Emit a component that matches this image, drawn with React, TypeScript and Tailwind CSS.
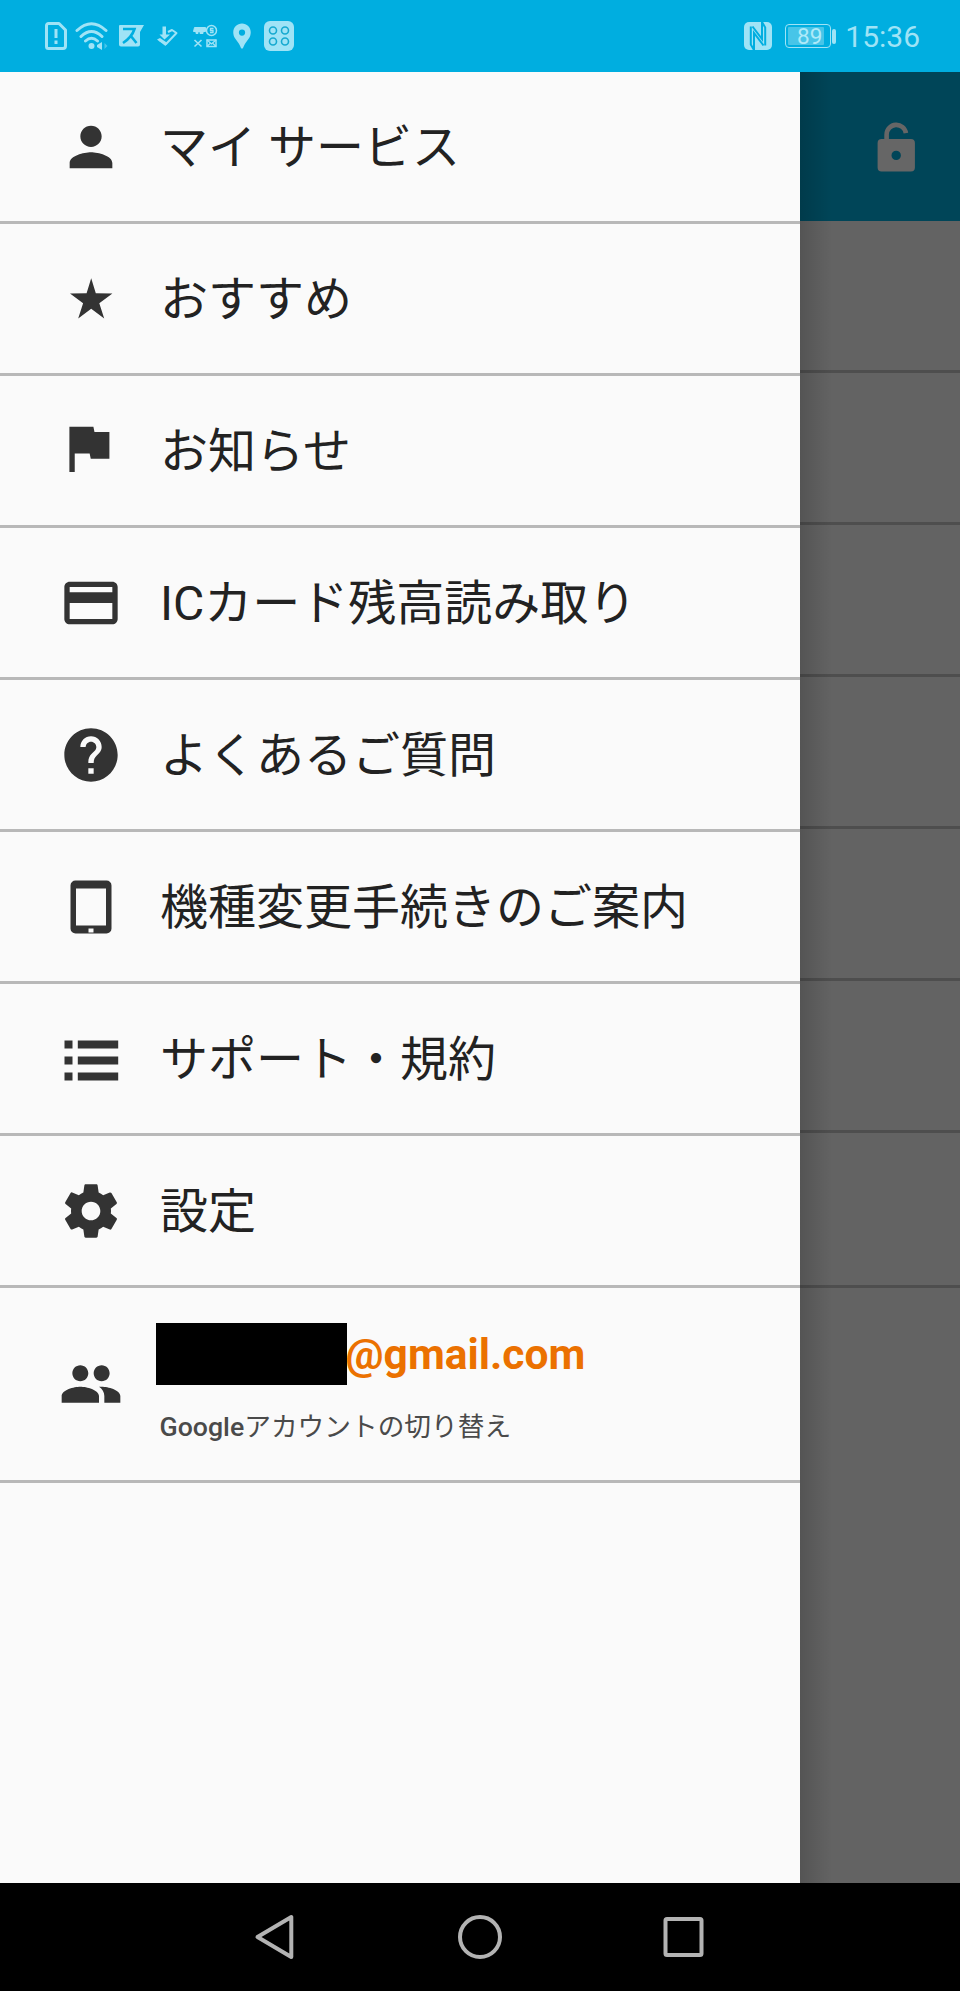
import React from 'react';
import { MdPerson, MdCreditCard, MdHelp, MdPeople, MdLocationPin } from 'react-icons/md';

interface MenuItem {
  label: string;
  icon: React.ReactNode;
}

const StarIcon = () => (
  <svg viewBox="0 0 64 64" className="w-16 h-16" fill="currentColor">
    <path d="M32.200 11.200L36.800 26.200 53.400 26.500 40.300 36.200 45.200 51.500 32.200 41.800 19.200 51.500 24.100 36.200 11 26.500 27.600 26.200z" />
  </svg>
);

const FlagIcon = () => (
  <svg viewBox="1.1 1.1 24 24" className="w-16 h-16" fill="currentColor">
    <path d="M14.4 6L14 4H5v17h2v-7h5.6l.4 2h7V6z" />
  </svg>
);

const TabletIcon = () => (
  <svg viewBox="0 0 64 64" className="w-16 h-16" fill="currentColor" fillRule="evenodd">
    <path d="M16.500 5.500h31a5 5 0 0 1 5 5v43a5 5 0 0 1-5 5h-31a5 5 0 0 1-5-5v-43a5 5 0 0 1 5-5zM17 13.500v37h30v-37zM29.500 53.500v4h5v-4z" />
  </svg>
);

const ListIcon = () => (
  <svg viewBox="0 0 64 64" className="w-16 h-16" fill="currentColor">
    <path d="M5.500 13.500h8v8h-8zM18.800 13.500h40.400v8H18.800zM5.500 29.500h8v8h-8zM18.800 29.500h40.400v8H18.800zM5.500 45.500h8v8h-8zM18.800 45.500h40.400v8H18.800z" />
  </svg>
);

const GearIcon = () => (
  <svg viewBox="0 0 24 24" className="w-16 h-16" fill="currentColor">
    <path d="M19.43 12.98c.04-.32.07-.64.07-.98s-.03-.66-.07-.98l2.11-1.65c.19-.15.24-.42.12-.64l-2-3.46c-.12-.22-.39-.3-.61-.22l-2.49 1c-.52-.4-1.08-.73-1.69-.98l-.38-2.65C14.46 2.18 14.25 2 14 2h-4c-.25 0-.46.18-.49.42l-.38 2.65c-.61.25-1.17.59-1.69.98l-2.49-1c-.23-.09-.49 0-.61.22l-2 3.46c-.13.22-.07.49.12.64l2.11 1.65c-.04.32-.07.65-.07.98s.03.66.07.98l-2.11 1.65c-.19.15-.24.42-.12.64l2 3.46c.12.22.39.3.61.22l2.49-1c.52.4 1.08.73 1.69.98l.38 2.65c.03.24.24.42.49.42h4c.25 0 .46-.18.49-.42l.38-2.65c.61-.25 1.17-.59 1.69-.98l2.49 1c.23.09.49 0 .61-.22l2-3.46c.12-.22.07-.49-.12-.64l-2.11-1.65zM12 15.5c-1.93 0-3.5-1.57-3.5-3.5s1.57-3.500 3.5-3.500 3.5 1.57 3.5 3.5-1.57 3.5-3.5 3.5z" />
  </svg>
);

const UnlockIcon = () => (
  <svg viewBox="0 4.6 64 64" className="w-16 h-16">
    <path d="M22.600 32V24a9.700 9.700 0 0 1 19.300-1.200" fill="none" stroke="currentColor" strokeWidth="4.600" />
    <path fillRule="evenodd" fill="currentColor" d="M17.600 28.500h29.300a4 4 0 0 1 4 4v24.500a4 4 0 0 1-4 4H17.600a4 4 0 0 1-4-4V32.500a4 4 0 0 1 4-4zM32.200 40.300a4.700 4.700 0 1 0 0 9.400 4.700 4.700 0 1 0 0-9.400z" />
  </svg>
);

const menuItems: MenuItem[] = [
  { label: 'マイ サービス', icon: <MdPerson className="w-16 h-16" /> },
  { label: 'おすすめ', icon: <StarIcon /> },
  { label: 'お知らせ', icon: <FlagIcon /> },
  { label: 'ICカード残高読み取り', icon: <MdCreditCard className="w-16 h-16" /> },
  { label: 'よくあるご質問', icon: <MdHelp className="w-16 h-16" /> },
  { label: '機種変更手続きのご案内', icon: <TabletIcon /> },
  { label: 'サポート・規約', icon: <ListIcon /> },
  { label: '設定', icon: <GearIcon /> },
];

const StatusBar = () => (
  <div className="h-[72px] shrink-0 bg-[#00aee0] flex items-center justify-between pl-[44px] pr-[40px] text-[#9fe3f6]">
    <div className="flex items-center">
      {/* SIM alert */}
      <svg viewBox="0 0 24 30" className="w-6 h-[30px]" fill="none" stroke="currentColor" strokeWidth="3">
        <path d="M4.500 2.500h10.500l6.500 6.500v16a2.500 2.500 0 0 1-2.500 2.500H4.500a2 2 0 0 1-2-2v-21a2 2 0 0 1 2-2z" strokeLinejoin="round" />
        <path d="M12 8v9M12 19.500v3.500" />
      </svg>
      {/* Wi-Fi */}
      <svg viewBox="0 0 34 30" className="w-[34px] h-[30px] ml-[7px]" fill="none" stroke="currentColor" strokeWidth="3" strokeLinecap="round">
        <path d="M2 9.500Q16.500-4 31 9.500M6 15.500Q16.500 5.500 27 15.500M10.500 20Q16.500 14.500 22.500 20" />
        <circle cx="16.500" cy="25" r="3" fill="currentColor" stroke="none" />
        <path d="M27 21v8l-5-3v-2z" fill="currentColor" stroke="none" />
        <path d="M29.500 22v6l3-3z" fill="currentColor" stroke="none" opacity="0.45" />
      </svg>
      {/* Notification badge */}
      <svg viewBox="0 0 26 24" className="w-[26px] h-6 ml-[9px]">
        <path d="M2 1h24l-4 7v12.500a2 2 0 0 1-2 2H3a2 2 0 0 1-2-2V2a1 1 0 0 1 1-1z" fill="currentColor" />
        <path d="M5 5h11.500Q14 13 5 19M12.500 11.500l6 7.500" fill="none" stroke="#00aee0" strokeWidth="2.600" />
      </svg>
      {/* Phone transfer */}
      <svg viewBox="0 0 22 22" className="w-[22px] h-[22px] ml-[12px]">
        <path d="M12 7l4-2 4.500 3L10 19 3 15" fill="none" stroke="currentColor" strokeWidth="2" strokeLinejoin="round" />
        <path d="M1 14.500l3-1.500 7.500 5-2 3z" fill="currentColor" />
        <path d="M6.500 1.500h3.500v8h4L8.500 14.500 3.500 9.500h3z" fill="currentColor" />
      </svg>
      {/* Key and mail */}
      <svg viewBox="0 0 26 24" className="w-[26px] h-6 ml-[14px]" fill="none" stroke="currentColor">
        <path d="M2.500 3.500h11v4H11v2H8v-2H6v2H4v-2H1.500z" fill="currentColor" />
        <circle cx="19.500" cy="6.500" r="5" strokeWidth="1.500" />
        <path d="M21.500 4.500h-3v2h2.500v2h-3" strokeWidth="1.300" />
        <path d="M2.500 16l7 6.500M9.500 16l-7 6.500" strokeWidth="1.600" />
        <rect x="15" y="16" width="9" height="6.500" strokeWidth="1.500" />
        <path d="M15 16l4.500 4 4.500-4M15 22.500l3-3M24 22.500l-3-3" strokeWidth="1.300" />
      </svg>
      <MdLocationPin className="w-[30px] h-[30px] ml-[9px]" />
      {/* App clone */}
      <svg viewBox="0 0 30 30" className="w-[30px] h-[30px] ml-[7px]">
        <rect width="30" height="30" rx="6" fill="currentColor" />
        <g fill="none" stroke="#16a9d0" strokeWidth="1.600">
          <circle cx="9" cy="9.500" r="3.500" />
          <circle cx="21" cy="9.500" r="3.500" />
          <circle cx="9" cy="20.500" r="3.500" />
          <circle cx="21" cy="20.500" r="3.500" />
        </g>
      </svg>
    </div>
    <div className="flex items-center">
      {/* NFC */}
      <svg viewBox="0 0 28 28" className="w-7 h-7">
        <rect width="28" height="28" rx="5" fill="currentColor" />
        <g fill="none" stroke="#00aee0" strokeWidth="2">
          <path d="M6.800 4.500V22.500L10 28V11l9.500 12.500" />
          <path d="M21.200 23.500V5.500L18 0v17L8.500 4.500" />
        </g>
      </svg>
      {/* Battery */}
      <div className="ml-[13px] w-[46px] h-6 rounded-[4px] border border-[#9fe3f6] p-[2px]">
        <div className="w-[36px] h-[18px] bg-[#47c5e8] rounded-[1px] flex items-center justify-end pr-[2px] text-[22.500px] leading-none text-[#aeeaf9]">89</div>
      </div>
      <div className="w-1 h-[15px] rounded-sm bg-current ml-[1px]" />
      <div className="ml-[9px] pt-[2px] text-[30px] leading-none">15:36</div>
    </div>
  </div>
);

const NavBar = () => (
  <div className="h-[108px] shrink-0 bg-black flex items-center justify-center gap-[160px] text-[#b3b3b3]">
    <svg viewBox="0 0 44 46" className="w-11 h-[46px]" fill="none" stroke="currentColor" strokeWidth="4" strokeLinejoin="round">
      <path d="M3.500 23L37.300 3v40z" />
    </svg>
    <svg viewBox="0 0 44 44" className="w-11 h-11" fill="none" stroke="currentColor" strokeWidth="4">
      <circle cx="22" cy="22" r="20" />
    </svg>
    <svg viewBox="0 0 44 44" className="w-11 h-11" fill="none" stroke="currentColor" strokeWidth="4">
      <rect x="3.500" y="4" width="36" height="36" rx="1.500" />
    </svg>
  </div>
);

const Drawer = () => (
  <div className="w-[800px] bg-[#fafafa] text-[#333333]">
    {menuItems.map(item => (
      <div key={item.label} className="h-[152px] border-b-3 border-[#b8b8b8] flex items-center pl-[58.500px]">
        {item.icon}
        <span className="ml-[37.500px] pt-[3px] text-[48px] leading-none text-[#222222]">{item.label}</span>
      </div>
    ))}
    <div className="h-[195px] border-b-3 border-[#b8b8b8] flex items-center pl-[58.500px]">
      <MdPeople className="w-16 h-16" />
      <div className="ml-[33px] pb-[5px]">
        <div className="flex items-center">
          <div className="w-[191px] h-[62px] bg-black" />
          <span className="-ml-px pt-[3px] text-[42.500px] leading-none font-bold text-[#eb7100]">@gmail.com</span>
        </div>
        <div className="mt-[29px] ml-[4px] text-[26.700px] leading-none text-[#4a4a4a]">
          <span className="font-medium">Google</span>アカウントの切り替え
        </div>
      </div>
    </div>
  </div>
);

// Page behind the open drawer, already darkened by the scrim
const DimmedPage = () => (
  <div className="relative flex-1 bg-[#636363]">
    <div className="h-[149px] bg-[#004558] flex items-center justify-end pr-[32px] text-[#666666]">
      <UnlockIcon />
    </div>
    {menuItems.slice(1).map(item => (
      <div key={item.label} className="h-[152px] last-of-type:h-[155px] border-b-3 border-[#4e4e4e]" />
    ))}
    <span className="absolute inset-y-0 left-0 w-8 bg-linear-to-r from-black/15 to-transparent" />
  </div>
);

export default function App() {
  return (
    <div className="w-[960px] h-[1991px] flex flex-col overflow-hidden font-[Roboto,'Noto_Sans_CJK_JP',sans-serif]">
      <StatusBar />
      <div className="flex-1 flex">
        <Drawer />
        <DimmedPage />
      </div>
      <NavBar />
    </div>
  );
}
